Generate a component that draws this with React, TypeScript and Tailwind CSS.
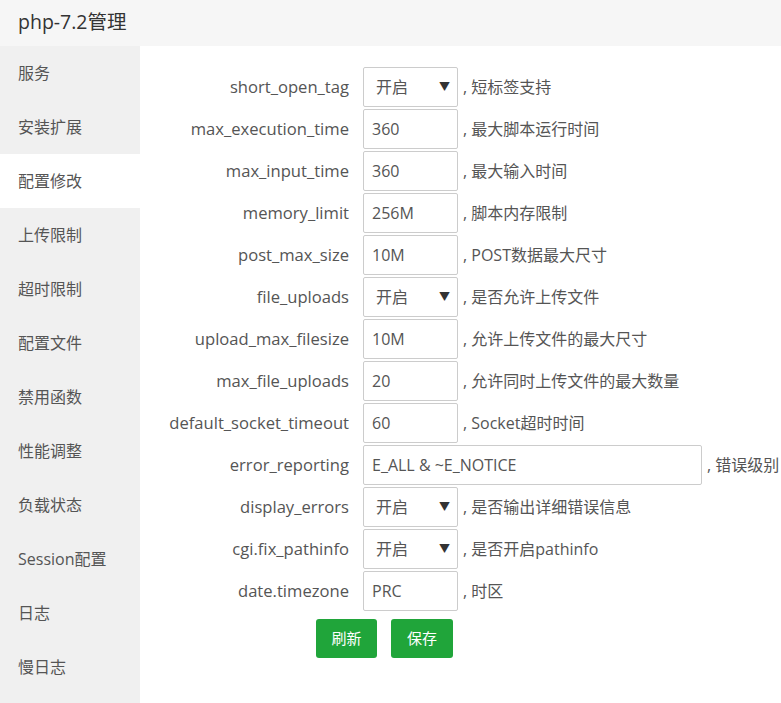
import React from 'react';

const font = { fontFamily: '"Open Sans", "Noto Sans CJK SC", sans-serif' };

const menu = ['服务', '安装扩展', '配置修改', '上传限制', '超时限制', '配置文件', '禁用函数', '性能调整', '负载状态', 'Session配置', '日志', '慢日志'];

type Row = { name: string; value: string; select?: boolean; wide?: boolean; desc: string };

const rows: Row[] = [
  { name: 'short_open_tag', value: '开启', select: true, desc: '短标签支持' },
  { name: 'max_execution_time', value: '360', desc: '最大脚本运行时间' },
  { name: 'max_input_time', value: '360', desc: '最大输入时间' },
  { name: 'memory_limit', value: '256M', desc: '脚本内存限制' },
  { name: 'post_max_size', value: '10M', desc: 'POST数据最大尺寸' },
  { name: 'file_uploads', value: '开启', select: true, desc: '是否允许上传文件' },
  { name: 'upload_max_filesize', value: '10M', desc: '允许上传文件的最大尺寸' },
  { name: 'max_file_uploads', value: '20', desc: '允许同时上传文件的最大数量' },
  { name: 'default_socket_timeout', value: '60', desc: 'Socket超时时间' },
  { name: 'error_reporting', value: 'E_ALL & ~E_NOTICE', wide: true, desc: '错误级别' },
  { name: 'display_errors', value: '开启', select: true, desc: '是否输出详细错误信息' },
  { name: 'cgi.fix_pathinfo', value: '开启', select: true, desc: '是否开启pathinfo' },
  { name: 'date.timezone', value: 'PRC', desc: '时区' },
];

export default function App() {
  return (
    <div className="w-[781px] h-[703px] overflow-hidden bg-white text-[#555]" style={font}>
      {/* Header */}
      <div className="h-[46px] bg-[#f6f6f6] flex items-center pl-[18px] pb-[3px] text-[19.5px] text-[#333]">
        php-7.2管理
      </div>
      <div className="flex h-[657px]">
        {/* Sidebar */}
        <div className="w-[140px] shrink-0 bg-[#f0f0f0]">
          {menu.map((m) => (
            <div
              key={m}
              className={`h-[54px] flex items-center pl-[18px] text-[16px] text-[#555] ${m === '配置修改' ? 'bg-white' : ''}`}
            >
              {m}
            </div>
          ))}
        </div>
        {/* Form */}
        <div className="flex-1 pt-[20px] whitespace-nowrap">
          {rows.map((r) => (
            <div key={r.name} className="flex items-center h-[42px]">
              <div className="w-[209px] text-right text-[16.6px] text-[#555]">{r.name}</div>
              <div
                className={`ml-[14px] h-[40px] border border-[#ccc] rounded-[2px] flex items-center px-[8px] text-[16px] text-[#555] ${r.wide ? 'w-[339px]' : 'w-[95px]'} ${r.select ? 'pl-[12px] justify-between' : ''}`}
              >
                <span>{r.value}</span>
                {r.select && <span className="text-[11px] text-[#333] mr-[-1px]">▼</span>}
              </div>
              <div className="ml-[5px] text-[16px] text-[#555]">, {r.desc}</div>
            </div>
          ))}
          <div className="flex gap-[14px] pl-[176px] mt-[7px]">
            <button className="w-[61px] h-[39px] rounded-[3px] bg-[#20a53a] text-white text-[15px]">刷新</button>
            <button className="w-[62px] h-[39px] rounded-[3px] bg-[#20a53a] text-white text-[15px]">保存</button>
          </div>
        </div>
      </div>
    </div>
  );
}
